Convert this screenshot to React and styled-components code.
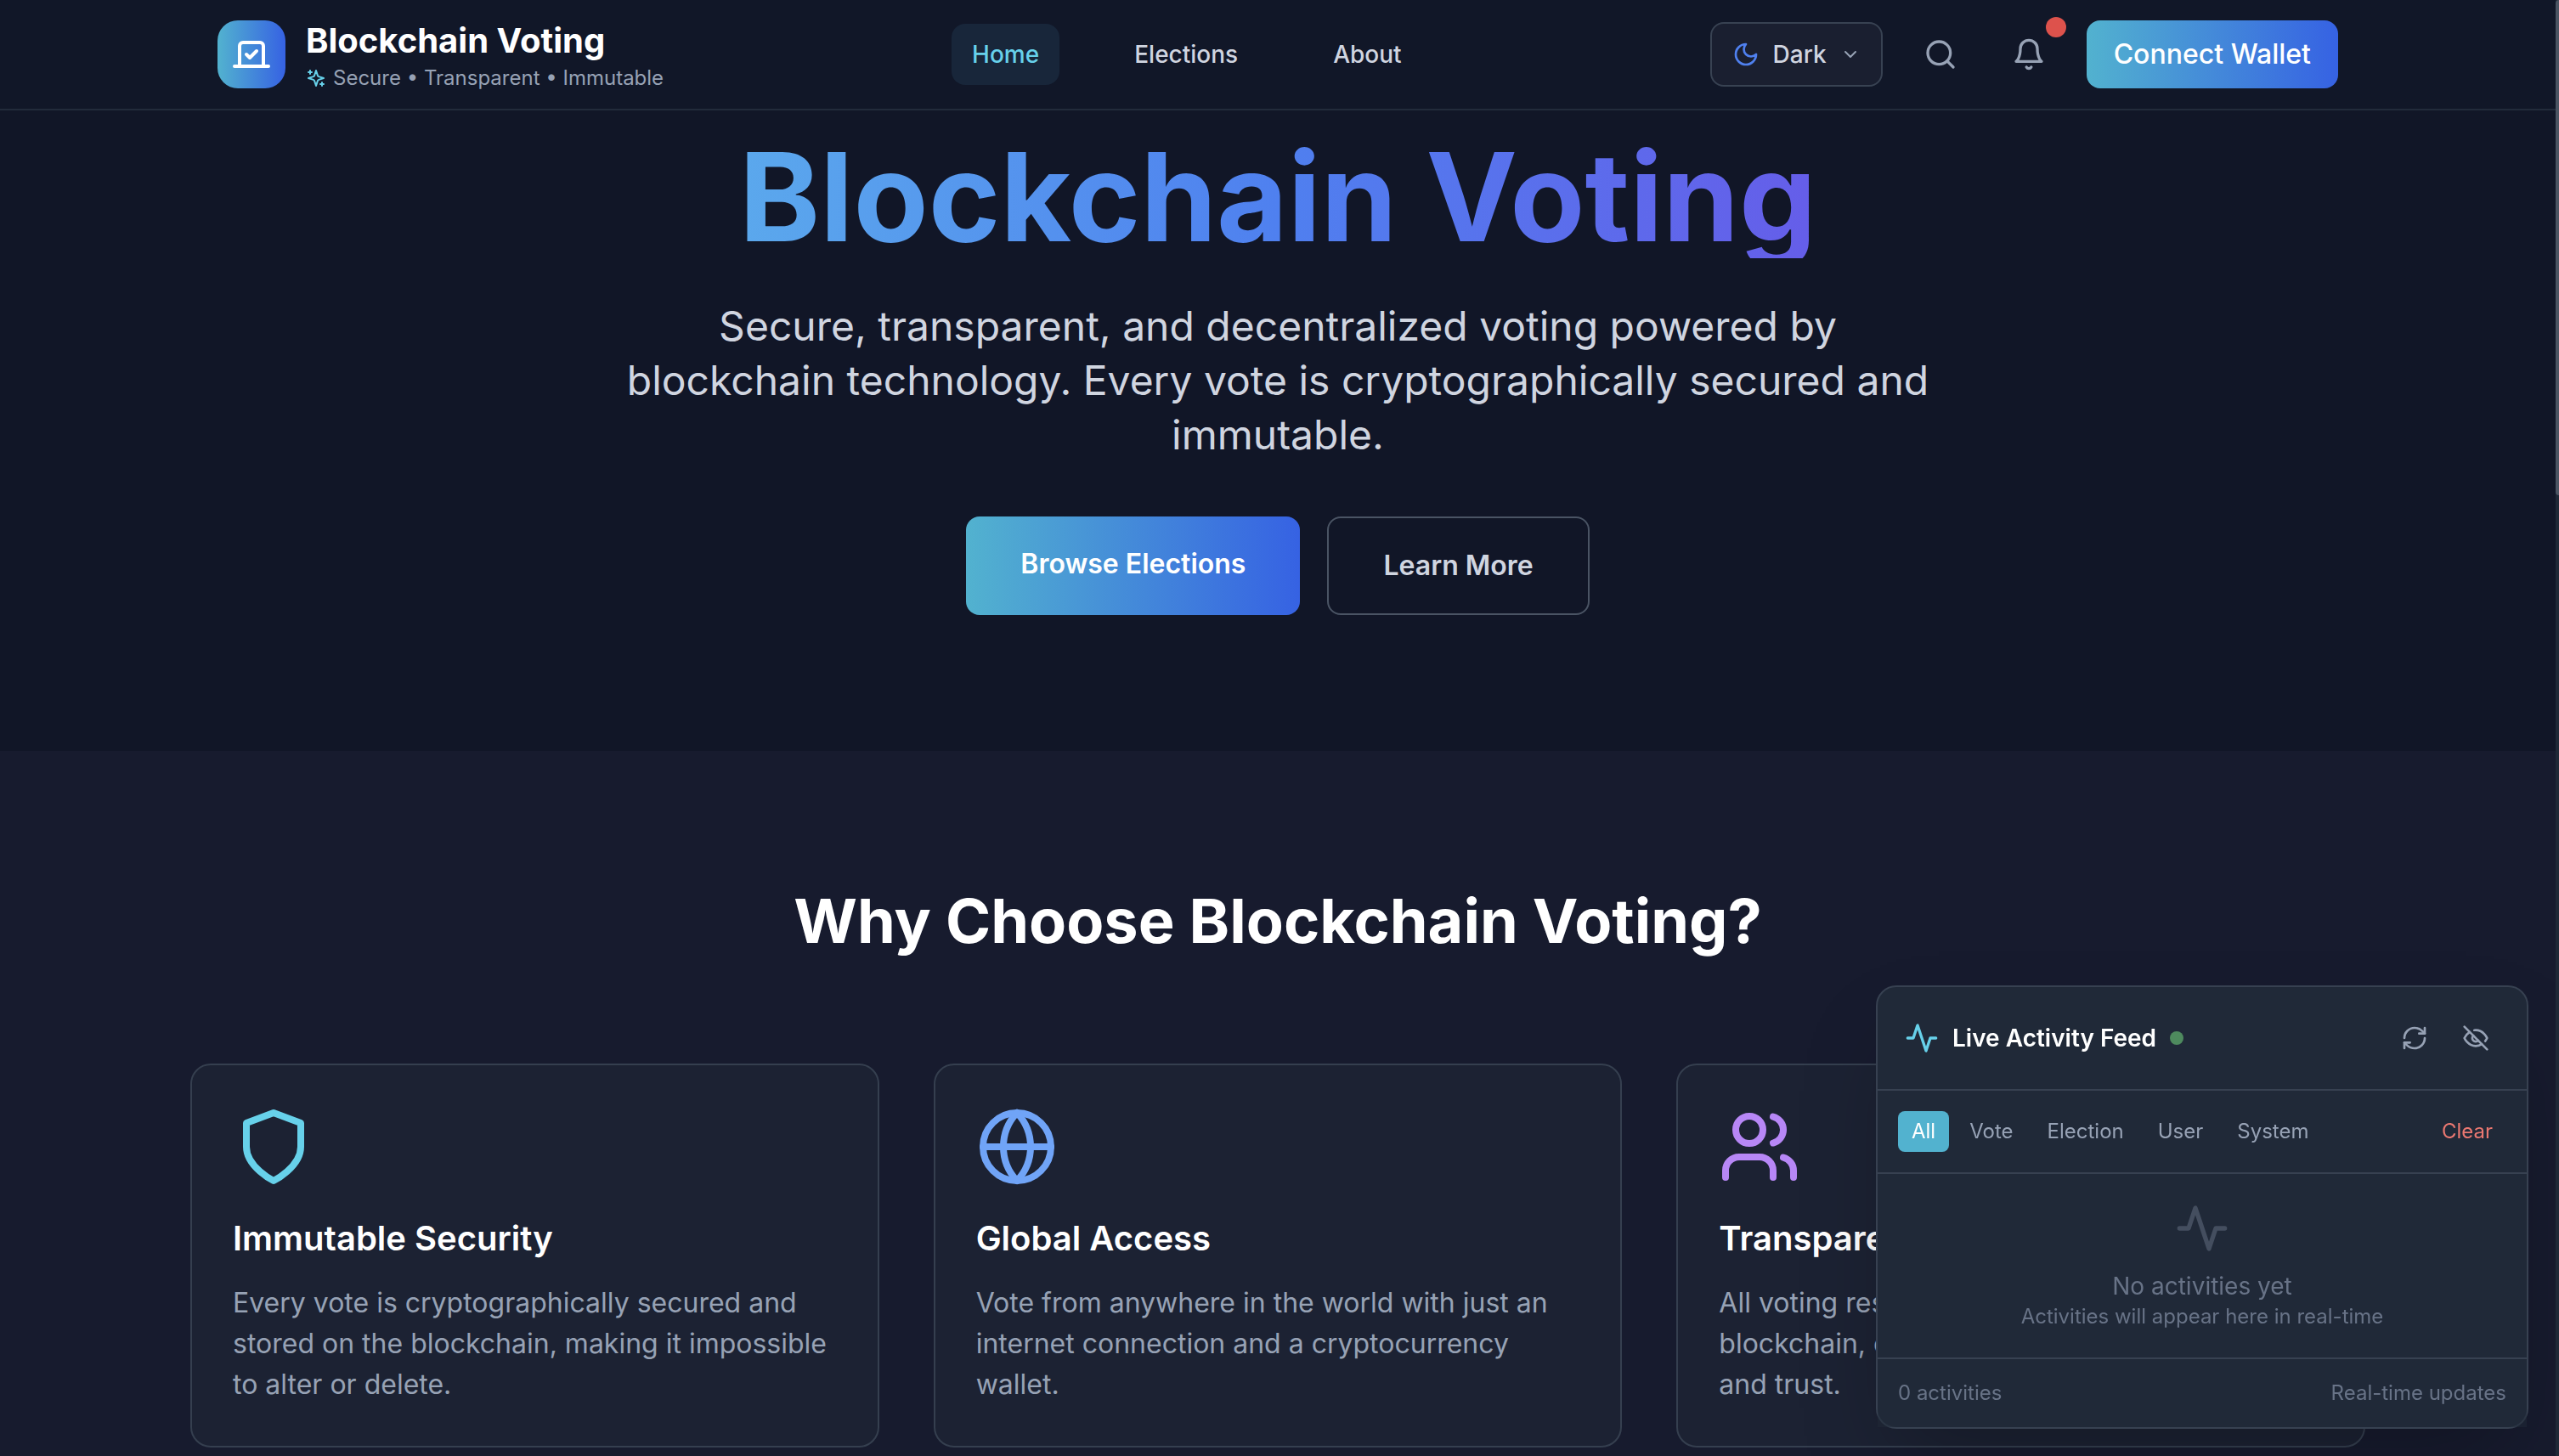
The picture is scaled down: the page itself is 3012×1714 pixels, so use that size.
import React from 'react';
import styled, { createGlobalStyle } from 'styled-components';

const GlobalStyle = createGlobalStyle`
  *, *::before, *::after { box-sizing: border-box; }
  html { background: #171b2e; }
  body {
    margin: 0;
    background: #171b2e;
    color: #ffffff;
    font-family: Inter, "Liberation Sans", sans-serif;
    font-size: 32px;
    line-height: 48px;
  }
  h1, h2, h3, p { margin: 0; padding: 0; }
  button, select { font: inherit; color: inherit; border: 0; background: none; margin: 0; padding: 0; cursor: pointer; }
  a { color: inherit; text-decoration: none; }
  svg { display: block; flex: none; }
`;

const Glyph = ({ size, color = 'currentColor', children }) => (
  <svg
    width={size}
    height={size}
    viewBox="0 0 24 24"
    fill="none"
    stroke={color}
    strokeWidth="2"
    strokeLinecap="round"
    strokeLinejoin="round"
    aria-hidden="true"
  >
    {children}
  </svg>
);

const BallotIcon = (p) => (
  <Glyph {...p}>
    <path d="m9 12 2 2 4-4" />
    <path d="M5 7c0-1.1.9-2 2-2h10a2 2 0 0 1 2 2v12H5V7Z" />
    <path d="M22 19H2" />
  </Glyph>
);
const SparklesIcon = (p) => (
  <Glyph {...p}>
    <path d="m12 3-1.912 5.813a2 2 0 0 1-1.275 1.275L3 12l5.813 1.912a2 2 0 0 1 1.275 1.275L12 21l1.912-5.813a2 2 0 0 1 1.275-1.275L21 12l-5.813-1.912a2 2 0 0 1-1.275-1.275L12 3Z" />
    <path d="M5 3v4M19 17v4M3 5h4M17 19h4" />
  </Glyph>
);
const MoonIcon = (p) => (
  <Glyph {...p}>
    <path d="M12 3a6 6 0 0 0 9 9 9 9 0 1 1-9-9Z" />
  </Glyph>
);
const ChevronIcon = (p) => (
  <Glyph {...p}>
    <path d="m6 9 6 6 6-6" />
  </Glyph>
);
const SearchIcon = (p) => (
  <Glyph {...p}>
    <circle cx="11" cy="11" r="8" />
    <path d="m21 21-4.3-4.3" />
  </Glyph>
);
const BellIcon = (p) => (
  <Glyph {...p}>
    <path d="M6 8a6 6 0 0 1 12 0c0 7 3 9 3 9H3s3-2 3-9" />
    <path d="M10.3 21a1.94 1.94 0 0 0 3.4 0" />
  </Glyph>
);
const ShieldIcon = (p) => (
  <Glyph {...p}>
    <path d="M12 22s8-4 8-10V5l-8-3-8 3v7c0 6 8 10 8 10z" />
  </Glyph>
);
const GlobeIcon = (p) => (
  <Glyph {...p}>
    <circle cx="12" cy="12" r="10" />
    <path d="M12 2a14.5 14.5 0 0 0 0 20 14.5 14.5 0 0 0 0-20" />
    <path d="M2 12h20" />
  </Glyph>
);
const UsersIcon = (p) => (
  <Glyph {...p}>
    <path d="M16 21v-2a4 4 0 0 0-4-4H6a4 4 0 0 0-4 4v2" />
    <circle cx="9" cy="7" r="4" />
    <path d="M22 21v-2a4 4 0 0 0-3-3.87" />
    <path d="M16 3.13a4 4 0 0 1 0 7.75" />
  </Glyph>
);
const ActivityIcon = (p) => (
  <Glyph {...p}>
    <path d="M22 12h-4l-3 9L9 3l-3 9H2" />
  </Glyph>
);
const RefreshIcon = (p) => (
  <Glyph {...p}>
    <path d="M3 12a9 9 0 0 1 9-9 9.75 9.75 0 0 1 6.74 2.74L21 8" />
    <path d="M21 3v5h-5" />
    <path d="M21 12a9 9 0 0 1-9 9 9.75 9.75 0 0 1-6.74-2.74L3 16" />
    <path d="M8 16H3v5" />
  </Glyph>
);
const EyeOffIcon = (p) => (
  <Glyph {...p}>
    <path d="M9.88 9.88a3 3 0 1 0 4.24 4.24" />
    <path d="M10.73 5.08A10.43 10.43 0 0 1 12 5c7 0 10 7 10 7a13.16 13.16 0 0 1-1.67 2.68" />
    <path d="M6.61 6.61A13.526 13.526 0 0 0 2 12s3 7 10 7a9.74 9.74 0 0 0 5.39-1.61" />
    <path d="m2 2 20 20" />
  </Glyph>
);

const Page = styled.div`
  padding-right: 4px;
`;

const Header = styled.header`
  position: fixed;
  inset: 0 4px auto 0;
  z-index: 10;
  background: #111728;
  border-bottom: 2px solid #222b3b;
`;

const HeaderInner = styled.div`
  max-width: 2560px;
  height: 128px;
  margin: 0 auto;
  padding: 0 32px;
  display: flex;
  align-items: center;
  justify-content: space-between;
`;

const Brand = styled.a`
  display: flex;
  align-items: center;
  gap: 24px;
`;

const BrandMark = styled.span`
  width: 80px;
  height: 80px;
  border-radius: 24px;
  display: grid;
  place-items: center;
  background: linear-gradient(to right, #52b2cf, #3662e3);
`;

const BrandName = styled.span`
  display: block;
  font-size: 40px;
  line-height: 56px;
  font-weight: 700;
`;

const BrandTagline = styled.span`
  display: flex;
  align-items: center;
  gap: 8px;
  font-size: 24px;
  line-height: 32px;
  color: #97a2b5;
`;

const Nav = styled.nav`
  display: flex;
  align-items: center;
  gap: 64px;
`;

const NavLink = styled.a`
  padding: 16px 24px;
  border-radius: 16px;
  font-size: 28px;
  line-height: 40px;
  font-weight: 500;
  color: ${(p) => (p.$active ? '#67d1ea' : '#d0d5e0')};
  background: ${(p) => (p.$active ? '#18263a' : 'transparent')};
`;

const Actions = styled.div`
  display: flex;
  align-items: center;
  gap: 32px;
`;

const ThemePicker = styled.label`
  display: flex;
  align-items: center;
  gap: 16px;
  padding: 16px 24px;
  border: 2px solid #384252;
  border-radius: 16px;
  background: #1a1f30;
  color: #97a2b5;
`;

const ThemeSelect = styled.select`
  appearance: none;
  field-sizing: content;
  font-size: 28px;
  line-height: 40px;
  font-weight: 500;
  color: #d0d5e0;
`;

const IconButton = styled.button`
  position: relative;
  padding: ${(p) => (p.$compact ? '12px' : '16px')};
  border-radius: 16px;
  color: #97a2b5;
`;

const Badge = styled.span`
  position: absolute;
  top: -8px;
  right: -8px;
  width: 24px;
  height: 24px;
  border-radius: 50%;
  background: #dd524c;
`;

const WalletButton = styled.button`
  padding: 16px 32px;
  border-radius: 16px;
  font-weight: 500;
  color: #ffffff;
  background: linear-gradient(to right, #52b2cf, #3662e3);
`;

const Hero = styled.section`
  padding: 160px 32px;
  background: #111627;
  text-align: center;
`;

const HeroInner = styled.div`
  max-width: 2560px;
  margin: 0 auto;
`;

const HeroTitle = styled.h1`
  margin-bottom: 48px;
  font-size: 144px;
  line-height: 144px;
  font-weight: 700;
  color: transparent;
  background: linear-gradient(to right, #67d1ea, #4f80ef, #7c3ae3);
  -webkit-background-clip: text;
  background-clip: text;
`;

const HeroText = styled.p`
  max-width: 1536px;
  margin: 0 auto 64px;
  font-size: 48px;
  line-height: 64px;
  color: #d0d5e0;
`;

const HeroActions = styled.div`
  display: flex;
  justify-content: center;
  gap: 32px;
`;

const HeroLink = styled.a`
  padding: 32px 64px;
  border-radius: 16px;
  font-weight: 600;
`;

const PrimaryLink = styled(HeroLink)`
  color: #ffffff;
  background: linear-gradient(to right, #52b2cf, #3662e3);
`;

const OutlineLink = styled(HeroLink)`
  color: #d0d5e0;
  border: 2px solid #4a5464;
`;

const Features = styled.section`
  padding: 160px 32px;
  background: #171b2e;
`;

const FeaturesInner = styled.div`
  max-width: 2560px;
  margin: 0 auto;
`;

const SectionTitle = styled.h2`
  margin-bottom: 128px;
  font-size: 72px;
  line-height: 80px;
  font-weight: 700;
  text-align: center;
`;

const CardGrid = styled.div`
  display: grid;
  grid-template-columns: repeat(3, minmax(0, 1fr));
  gap: 64px;
`;

const Card = styled.article`
  padding: 48px;
  border: 2px solid #353f4f;
  border-radius: 24px;
  background: #1c2233;
`;

const CardTitle = styled.h3`
  margin: 32px 0 24px;
  font-size: 40px;
  line-height: 56px;
  font-weight: 600;
`;

const CardText = styled.p`
  color: #97a2b5;
`;

const Feed = styled.aside`
  position: fixed;
  right: 36px;
  bottom: 32px;
  z-index: 20;
  width: 768px;
  border: 2px solid #374151;
  border-radius: 24px;
  background: #202938;
  box-shadow: 0 50px 100px -24px rgba(0, 0, 0, 0.25);
  font-size: 24px;
  line-height: 32px;
`;

const FeedHeader = styled.header`
  display: flex;
  align-items: center;
  justify-content: space-between;
  padding: 32px;
  border-bottom: 2px solid #374151;
`;

const FeedTitle = styled.div`
  display: flex;
  align-items: center;
  gap: 16px;
`;

const FeedHeading = styled.h3`
  font-size: 28px;
  line-height: 40px;
  font-weight: 600;
`;

const LiveDot = styled.span`
  width: 16px;
  height: 16px;
  border-radius: 50%;
  background: #4e8a5e;
`;

const FeedTools = styled.div`
  display: flex;
  gap: 16px;
`;

const FeedFilters = styled.div`
  display: flex;
  align-items: center;
  gap: 8px;
  padding: 24px;
  border-bottom: 2px solid #374151;
`;

const FilterButton = styled.button`
  padding: 8px 16px;
  border-radius: 8px;
  color: ${(p) => (p.$active ? '#ffffff' : '#97a2b5')};
  background: ${(p) => (p.$active ? '#52b2cf' : 'transparent')};
`;

const ClearButton = styled(FilterButton)`
  margin-left: auto;
  color: #eb7871;
`;

const FeedEmpty = styled.div`
  display: flex;
  flex-direction: column;
  align-items: center;
  padding: 32px;
  color: #687387;
`;

const EmptyTitle = styled.p`
  margin-top: 16px;
  font-size: 28px;
  line-height: 40px;
`;

const FeedFooter = styled.footer`
  display: flex;
  justify-content: space-between;
  padding: 24px;
  border-top: 2px solid #374151;
  background: rgba(32, 41, 56, 0.5);
  color: #687387;
`;

const ScrollRail = styled.div`
  position: fixed;
  inset: 0 0 0 auto;
  z-index: 30;
  width: 4px;
  background: #1f2937;
`;

const ScrollThumb = styled.div`
  height: 34vh;
  border-radius: 4px 0 0 4px;
  background: #4b5563;
`;

const navItems = ['Home', 'Elections', 'About'];

const features = [
  {
    icon: <ShieldIcon size={96} color="#67d1ea" />,
    title: 'Immutable Security',
    text: 'Every vote is cryptographically secured and stored on the blockchain, making it impossible to alter or delete.',
  },
  {
    icon: <GlobeIcon size={96} color="#70a4f7" />,
    title: 'Global Access',
    text: 'Vote from anywhere in the world with just an internet connection and a cryptocurrency wallet.',
  },
  {
    icon: <UsersIcon size={96} color="#b787f6" />,
    title: 'Transparent Results',
    text: 'All voting results are publicly verifiable on the blockchain, ensuring complete transparency and trust.',
  },
];

const filters = ['All', 'Vote', 'Election', 'User', 'System'];

export default function App() {
  return (
    <Page>
      <GlobalStyle />
      <Header>
        <HeaderInner>
          <Brand href="#home">
            <BrandMark>
              <BallotIcon size={48} color="#ffffff" />
            </BrandMark>
            <span>
              <BrandName>Blockchain Voting</BrandName>
              <BrandTagline>
                <SparklesIcon size={24} color="#67d1ea" />
                Secure • Transparent • Immutable
              </BrandTagline>
            </span>
          </Brand>
          <Nav aria-label="Main">
            {navItems.map((item, i) => (
              <NavLink key={item} href={`#${item.toLowerCase()}`} $active={i === 0}>
                {item}
              </NavLink>
            ))}
          </Nav>
          <Actions>
            <ThemePicker>
              <MoonIcon size={32} color="#4f80ef" />
              <ThemeSelect aria-label="Theme" defaultValue="Dark">
                <option>Dark</option>
              </ThemeSelect>
              <ChevronIcon size={24} />
            </ThemePicker>
            <IconButton type="button" aria-label="Search">
              <SearchIcon size={40} />
            </IconButton>
            <IconButton type="button" aria-label="Notifications">
              <BellIcon size={40} />
              <Badge />
            </IconButton>
            <WalletButton type="button">Connect Wallet</WalletButton>
          </Actions>
        </HeaderInner>
      </Header>

      <main>
        <Hero>
          <HeroInner>
            <HeroTitle>Blockchain Voting</HeroTitle>
            <HeroText>
              Secure, transparent, and decentralized voting powered by blockchain technology. Every vote is
              cryptographically secured and immutable.
            </HeroText>
            <HeroActions>
              <PrimaryLink href="#elections">Browse Elections</PrimaryLink>
              <OutlineLink href="#about">Learn More</OutlineLink>
            </HeroActions>
          </HeroInner>
        </Hero>

        <Features>
          <FeaturesInner>
            <SectionTitle>Why Choose Blockchain Voting?</SectionTitle>
            <CardGrid>
              {features.map((f) => (
                <Card key={f.title}>
                  {f.icon}
                  <CardTitle>{f.title}</CardTitle>
                  <CardText>{f.text}</CardText>
                </Card>
              ))}
            </CardGrid>
          </FeaturesInner>
        </Features>
      </main>

      <Feed aria-label="Live Activity Feed">
        <FeedHeader>
          <FeedTitle>
            <ActivityIcon size={40} color="#67d1ea" />
            <FeedHeading>Live Activity Feed</FeedHeading>
            <LiveDot />
          </FeedTitle>
          <FeedTools>
            <IconButton type="button" $compact aria-label="Refresh">
              <RefreshIcon size={32} />
            </IconButton>
            <IconButton type="button" $compact aria-label="Hide feed">
              <EyeOffIcon size={32} />
            </IconButton>
          </FeedTools>
        </FeedHeader>
        <FeedFilters>
          {filters.map((name, i) => (
            <FilterButton key={name} type="button" $active={i === 0}>
              {name}
            </FilterButton>
          ))}
          <ClearButton type="button">Clear</ClearButton>
        </FeedFilters>
        <FeedEmpty>
          <ActivityIcon size={64} color="#444e5f" />
          <EmptyTitle>No activities yet</EmptyTitle>
          <p>Activities will appear here in real-time</p>
        </FeedEmpty>
        <FeedFooter>
          <span>0 activities</span>
          <span>Real-time updates</span>
        </FeedFooter>
      </Feed>

      <ScrollRail aria-hidden="true">
        <ScrollThumb />
      </ScrollRail>
    </Page>
  );
}
